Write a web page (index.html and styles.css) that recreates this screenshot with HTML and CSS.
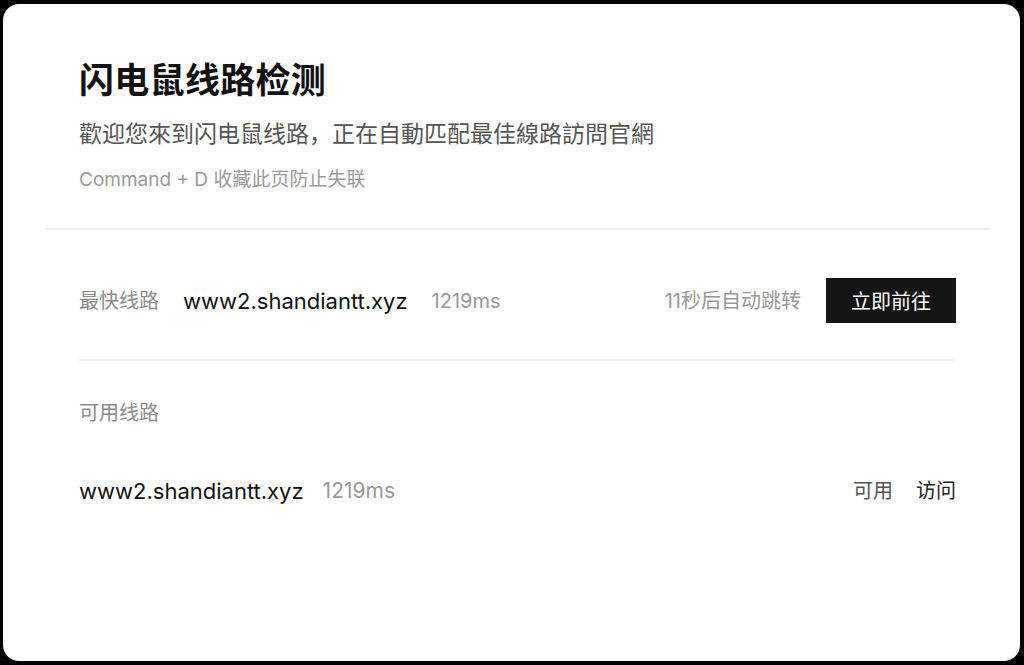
FILE: index.html
```html
<!DOCTYPE html>
<html lang="zh">
<head>
<meta charset="utf-8">
<title>闪电鼠线路检测</title>
<link rel="stylesheet" href="styles.css">
</head>
<body>
<div class="card">
  <header class="head">
    <h1 class="title">闪电鼠线路检测</h1>
    <p class="subtitle">歡迎您來到闪电鼠线路，正在自動匹配最佳線路訪問官網</p>
    <p class="tip">Command + D 收藏此页防止失联</p>
  </header>
  <div class="rule-top"></div>
  <main class="main">
    <div class="fast-row">
      <span class="label">最快线路</span>
      <span class="domain fast-domain">www2.shandiantt.xyz</span>
      <span class="ms fast-ms">1219ms</span>
      <span class="spacer"></span>
      <span class="countdown">11秒后自动跳转</span>
      <button class="go-btn">立即前往</button>
    </div>
    <div class="rule"></div>
    <div class="label section-label">可用线路</div>
    <div class="line-row">
      <span class="domain">www2.shandiantt.xyz</span>
      <span class="ms line-ms">1219ms</span>
      <span class="spacer"></span>
      <span class="status">可用</span>
      <a class="visit">访问</a>
    </div>
  </main>
</div>
</body>
</html>
```

FILE: styles.css
```css
html, body {
  margin: 0;
  padding: 0;
}
body {
  background: #000;
  width: 1024px;
  height: 665px;
  padding: 4px 4px 4px 3px;
  box-sizing: border-box;
  font-family: Inter, "Noto Sans CJK SC", sans-serif;
  color: #111;
}
.card {
  background: #fff;
  border-radius: 16px;
  height: 657px;
  overflow: hidden;
}
.head {
  padding: 54px 0 0 76px;
}
.title {
  margin: 0;
  font-size: 35px;
  line-height: 44px;
  font-weight: 700;
  color: #111;
  letter-spacing: 0.3px;
}
.subtitle {
  margin: 16px 0 0;
  font-size: 23px;
  line-height: 32px;
  color: #555;
  font-weight: 400;
}
.tip {
  margin: 17px 0 0;
  font-size: 19px;
  line-height: 26px;
  color: #9a9a9a;
}
.rule-top {
  margin: 35px 30px 0 42px;
  height: 2px;
  background: #efefef;
}
.main {
  padding: 0 64px 0 76px;
}
.fast-row {
  margin-top: 48px;
  display: flex;
  align-items: center;
  height: 45px;
}
.label {
  font-size: 20px;
  line-height: 28px;
  color: #8c8c8c;
}
.domain {
  font-size: 22px;
  line-height: 30px;
  color: #111;
}
.fast-domain {
  margin-left: 24px;
}
.ms {
  font-size: 20px;
  line-height: 28px;
  color: #999;
}
.fast-ms {
  margin-left: 24px;
}
.spacer {
  flex: 1;
}
.countdown {
  font-size: 20px;
  line-height: 28px;
  color: #999;
}
.go-btn {
  margin-left: 25px;
  width: 130px;
  height: 45px;
  border: 0;
  background: #151515;
  color: #fff;
  font-family: inherit;
  font-size: 20px;
  padding: 0;
}
.rule {
  margin-top: 36px;
  height: 2px;
  background: #f0f0f0;
}
.section-label {
  margin-top: 38px;
}
.line-row {
  margin-top: 49px;
  display: flex;
  align-items: center;
  height: 30px;
}
.line-ms {
  margin-left: 19px;
  font-size: 21px;
}
.status {
  font-size: 20px;
  line-height: 28px;
  color: #555;
}
.visit {
  margin-left: 23px;
  font-size: 20px;
  line-height: 28px;
  color: #222;
}
```
